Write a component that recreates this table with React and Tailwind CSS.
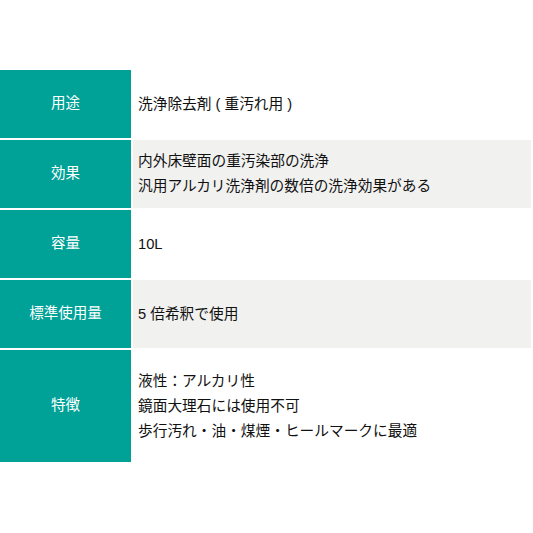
export default function App() {
  const rows = [
    { label: "用途", lines: ["洗浄除去剤 ( 重汚れ用 )"], h: "h-[68px]", bg: "bg-white" },
    { label: "効果", lines: ["内外床壁面の重汚染部の洗浄", "汎用アルカリ洗浄剤の数倍の洗浄効果がある"], h: "h-[68px]", bg: "bg-[#f1f1f0]" },
    { label: "容量", lines: ["10L"], h: "h-[68px]", bg: "bg-white" },
    { label: "標準使用量", lines: ["5 倍希釈で使用"], h: "h-[68px]", bg: "bg-[#f1f1f0]" },
    { label: "特徴", lines: ["液性：アルカリ性", "鏡面大理石には使用不可", "歩行汚れ・油・煤煙・ヒールマークに最適"], h: "h-[112px]", bg: "bg-white" },
  ];
  return (
    <div className="w-[533px] h-[533px] bg-white pt-[70px]" style={{ fontFamily: '"Liberation Sans", "Noto Sans CJK JP", sans-serif' }}>
      <div className="flex flex-col gap-[2px] w-[531px]">
        {rows.map((r) => (
          <div key={r.label} className={`flex gap-[2px] ${r.h}`}>
            <div className="w-[131px] shrink-0 bg-[#00a196] text-white text-[14.5px] flex items-center justify-center">
              {r.label}
            </div>
            <div className={`flex-1 ${r.bg} flex flex-col justify-center pl-[5px] text-[14.7px] leading-[25px] text-[#111]`}>
              {r.lines.map((l) => (
                <div key={l}>{l}</div>
              ))}
            </div>
          </div>
        ))}
      </div>
    </div>
  );
}
